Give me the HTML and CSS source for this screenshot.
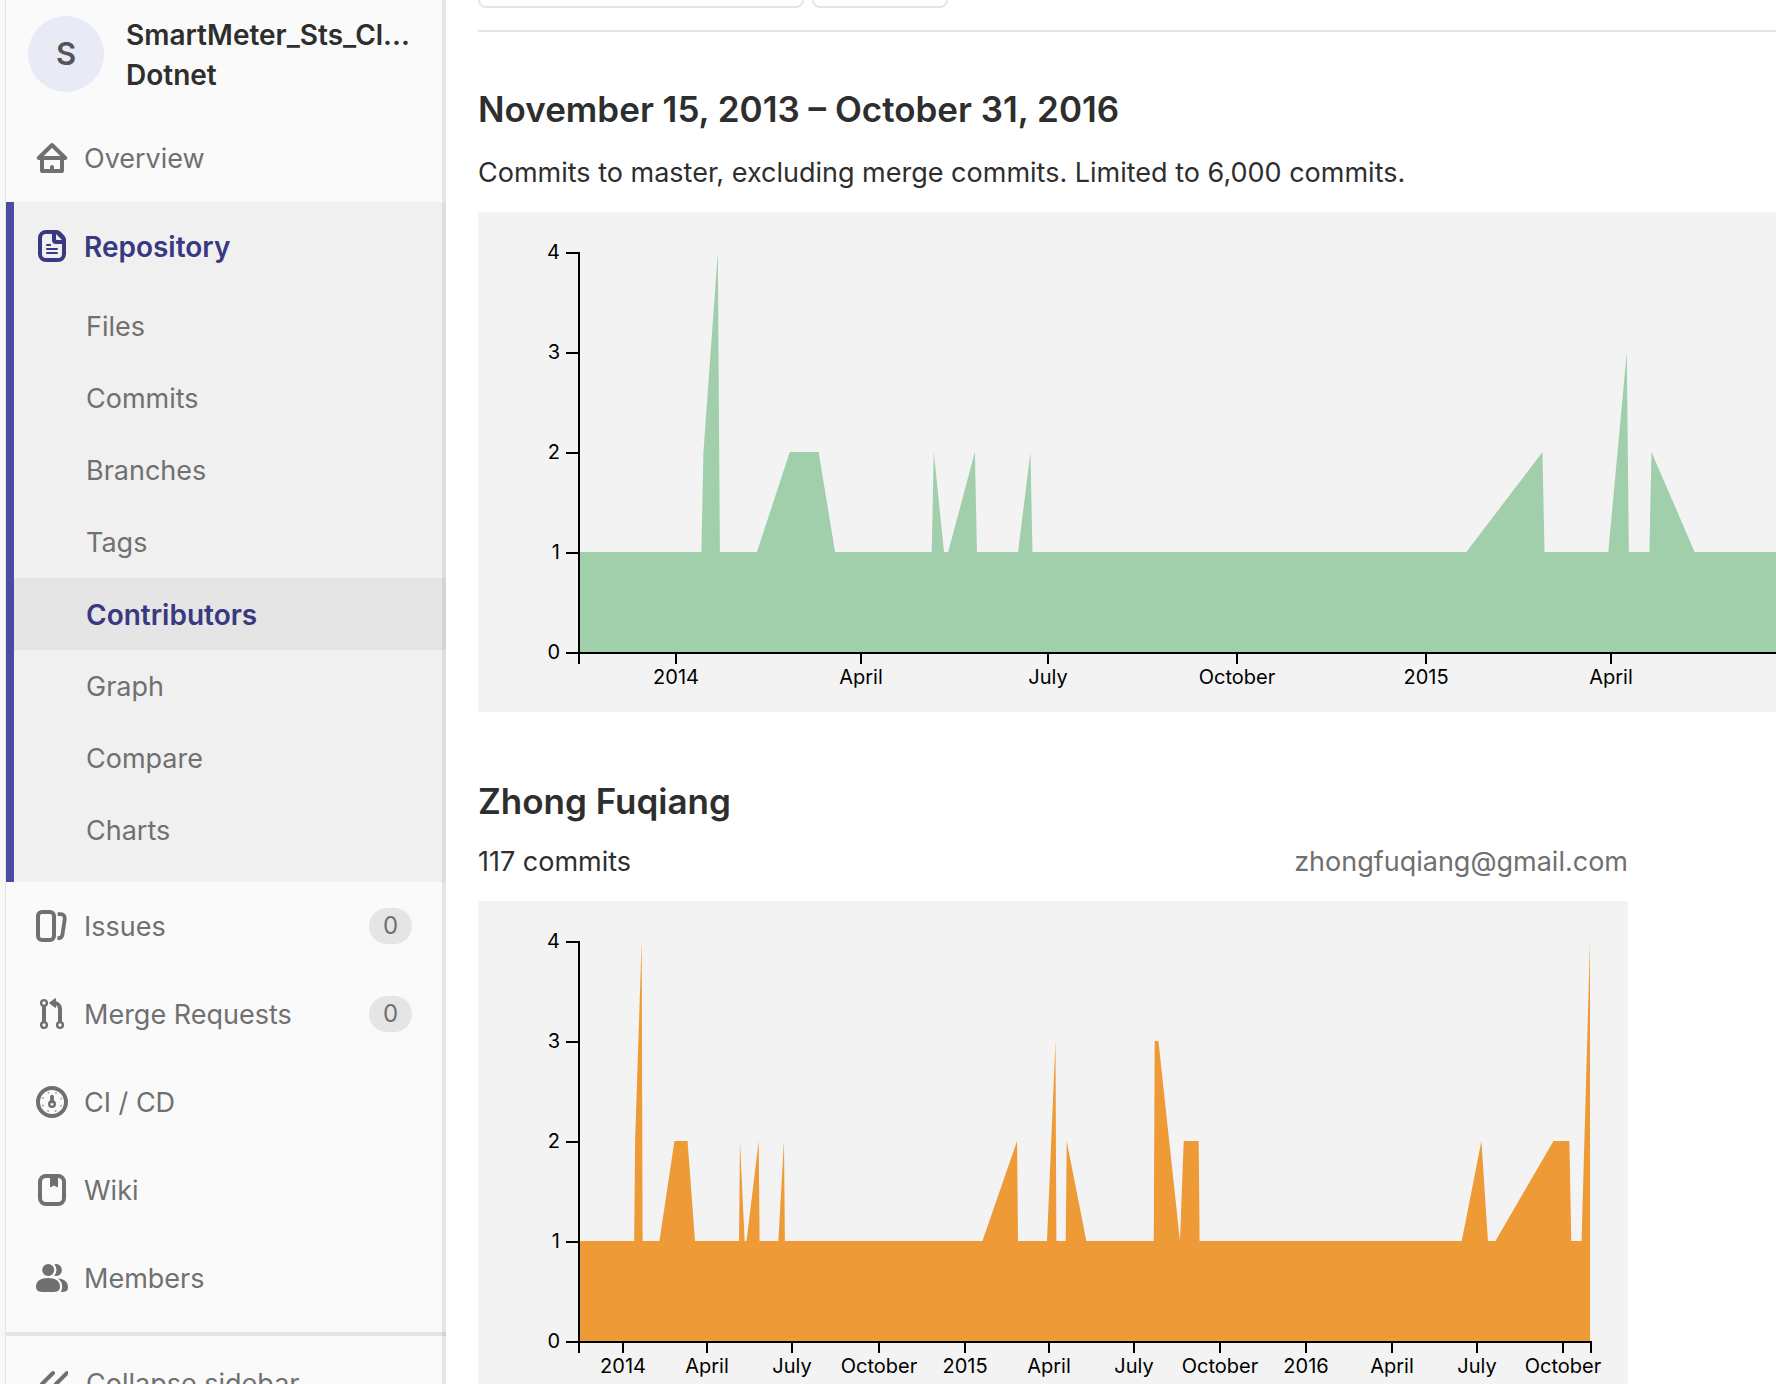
FILE: index.html
```html
<!DOCTYPE html>
<html lang="en">
<head>
<meta charset="utf-8">
<title>Contributors</title>
<link rel="stylesheet" href="styles.css">
</head>
<body>
<div class="layout">
  <aside class="sidebar">
    <a class="context" href="#">
      <span class="avatar">S</span>
      <span class="context-title">SmartMeter_Sts_Cl...<br>Dotnet</span>
    </a>
    <nav class="nav">
      <a class="nav-link" href="#">
        <svg class="icon" viewBox="0 0 16 16"><g fill="none" stroke="currentColor" stroke-width="2" stroke-linejoin="round" stroke-linecap="round"><path d="M1.4 8 8 1.5 14.6 8z"/><path d="M3 8v6.5h10V8"/></g><path d="M7 15v-2.5a1 1 0 0 1 2 0V15z" fill="currentColor"/></svg>
        <span class="nav-label">Overview</span>
      </a>
      <div class="section">
        <a class="nav-link nav-link-active" href="#">
          <svg class="icon" viewBox="0 0 16 16"><path fill="currentColor" fill-rule="evenodd" d="M5 0h5.2a3 3 0 0 1 2.1.9l1.8 1.8A3 3 0 0 1 15 4.800V12a4 4 0 0 1-4 4H5a4 4 0 0 1-4-4V4a4 4 0 0 1 4-4zm0 2a2 2 0 0 0-2 2v8a2 2 0 0 0 2 2h6a2 2 0 0 0 2-2V7h-3a2 2 0 0 1-2-2V2zm5 0v2.500a.5.5 0 0 0 .5.5H13z"/><path d="M5.500 7.500h1.600M5.500 9.500h5M5.500 11.500h5" stroke="currentColor" stroke-linecap="round"/></svg>
          <span class="nav-label">Repository</span>
        </a>
        <ul class="subnav">
          <li><a class="subnav-link" href="#">Files</a></li>
          <li><a class="subnav-link" href="#">Commits</a></li>
          <li><a class="subnav-link" href="#">Branches</a></li>
          <li><a class="subnav-link" href="#">Tags</a></li>
          <li><a class="subnav-link subnav-link-active" href="#">Contributors</a></li>
          <li><a class="subnav-link" href="#">Graph</a></li>
          <li><a class="subnav-link" href="#">Compare</a></li>
          <li><a class="subnav-link" href="#">Charts</a></li>
        </ul>
      </div>
      <a class="nav-link" href="#">
        <svg class="icon" viewBox="0 0 16 16"><g fill="none" stroke="currentColor" stroke-width="2"><rect x="1" y="1" width="8" height="14" rx="2"/><path d="M10.800 2.100h1.600a2 2 0 0 1 2 2.300l-1.200 8a2 2 0 0 1-2 1.700h-.5" stroke-width="1.900"/></g></svg>
        <span class="nav-label">Issues</span>
        <span class="badge">0</span>
      </a>
      <a class="nav-link" href="#">
        <svg class="icon" viewBox="0 0 16 16"><g fill="none" stroke="currentColor"><path stroke-width="2" d="M4 4.200v8.100M12 12.300V5.500a3 3 0 0 0-3-3"/><circle cx="4" cy="2.500" r="1.450" stroke-width="1.200"/><circle cx="4" cy="13.500" r="1.450" stroke-width="1.200"/><circle cx="12" cy="13.500" r="1.450" stroke-width="1.200"/></g><path fill="currentColor" stroke="currentColor" stroke-width=".6" stroke-linejoin="round" d="M6.900 2.500 9.700.4v4.200z"/></svg>
        <span class="nav-label">Merge Requests</span>
        <span class="badge">0</span>
      </a>
      <a class="nav-link" href="#">
        <svg class="icon" viewBox="0 0 16 16"><circle cx="8" cy="8" r="7" fill="none" stroke="currentColor" stroke-width="2"/><circle cx="8" cy="9" r="1.400" fill="none" stroke="currentColor" stroke-width="1.200"/><path d="M8 5.300v2.500" stroke="currentColor" stroke-width="1.900" stroke-linecap="round"/><circle cx="8" cy="8" r="4.900" fill="none" stroke="currentColor" stroke-width=".8" stroke-opacity=".7" stroke-dasharray=".8 3.048" stroke-dashoffset="-1.530"/></svg>
        <span class="nav-label">CI / CD</span>
      </a>
      <a class="nav-link" href="#">
        <svg class="icon" viewBox="0 0 16 16"><rect x="2" y="1" width="12" height="14" rx="3" fill="none" stroke="currentColor" stroke-width="2"/><path fill="currentColor" d="M7 1.500h4v4.700a.4.4 0 0 1-.6.300L9 5.800l-1.400.7a.4.4 0 0 1-.6-.3z"/></svg>
        <span class="nav-label">Wiki</span>
      </a>
      <a class="nav-link" href="#">
        <svg class="icon" viewBox="0 0 16 16"><g fill="currentColor"><circle cx="6.100" cy="4" r="3"/><path d="M9.200 1.100a3 3 0 1 1 0 5.800 4.600 4.600 0 0 0 0-5.800z"/><path d="M6 8c3.700 0 6 1.700 6 4.300 0 1.800-1 2.700-3 2.700H3c-2 0-3-.9-3-2.700C0 9.700 2.300 8 6 8z"/><path d="M11 8.200c3.100.2 5 1.800 5 4.200 0 1.700-.8 2.600-2.600 2.600h-1c.5-.7.7-1.600.7-2.600 0-1.800-.7-3.200-2.100-4.200z"/></g></svg>
        <span class="nav-label">Members</span>
      </a>
    </nav>
    <button class="collapse" type="button">
      <svg class="icon" viewBox="0 0 16 16"><path d="M8.500 3 3 8.500 8.500 14M15.500 3 10 8.500l5.500 5.500" fill="none" stroke="currentColor" stroke-width="2" stroke-linecap="round" stroke-linejoin="round"/></svg>
      <span class="nav-label">Collapse sidebar</span>
    </button>
  </aside>

  <main class="content">
    <div class="toolbar">
      <button class="control control-branch" type="button" aria-label="Branch"></button>
      <button class="control control-history" type="button" aria-label="History"></button>
    </div>

    <section class="block">
      <h4 class="heading">November 15, 2013 – October 31, 2016</h4>
      <p class="text">Commits to master, excluding merge commits. Limited to 6,000 commits.</p>
      <svg class="chart" role="img" aria-label="Commits to master">
        <defs>
          <!-- x is days since November 15, 2013; y is 4 minus the commit count -->
          <path id="commits" d="M0 4V3H60L61 2 68 0 69 3H87L103 2H117L125 3H172L173 2 178 3H180L193 2 194 3H214L220 2 221 3H432L469 2 470 3H501L510 1 511 3H521L522 2 543 3H615L616 1H620L643 3 647 2H663L664 3H944L965 2 972 3H980L1042 2H1059L1061 3H1072L1081 0V4z"/>
        </defs>
        <svg x="100" y="40" width="2223" height="400" viewBox="0 0 1081 4" preserveAspectRatio="none"><use href="#commits" class="area-total"/></svg>
        <path class="axis" d="M88 41h13v400H88M88 141h13M88 241h13M88 341h13M101 452V441H2324M198 441v11M383 441v11M570 441v11M759 441v11M948 441v11M1133 441v11"/>
        <g class="y-labels"><text x="82" y="47">4</text><text x="82" y="147">3</text><text x="82" y="247">2</text><text x="82" y="347">1</text><text x="82" y="447">0</text></g>
        <g class="x-labels"><text x="198" y="472">2014</text><text x="383" y="472">April</text><text x="570" y="472">July</text><text x="759" y="472">October</text><text x="948" y="472">2015</text><text x="1133" y="472">April</text></g>
      </svg>
    </section>

    <section class="block person">
      <h4 class="heading">Zhong Fuqiang</h4>
      <p class="text person-line"><span>117 commits</span><span class="muted">zhongfuqiang@gmail.com</span></p>
      <svg class="chart" role="img" aria-label="Commits by Zhong Fuqiang">
        <svg x="100" y="40" width="1012" height="400" viewBox="0 0 1081 4" preserveAspectRatio="none"><use href="#commits" class="area-person"/></svg>
        <path class="axis" d="M88 41h13v400H88M88 141h13M88 241h13M88 341h13M101 452V441H1113v11M145 441v11M229 441v11M314 441v11M401 441v11M487 441v11M571 441v11M656 441v11M742 441v11M828 441v11M914 441v11M999 441v11M1085 441v11"/>
        <g class="y-labels"><text x="82" y="47">4</text><text x="82" y="147">3</text><text x="82" y="247">2</text><text x="82" y="347">1</text><text x="82" y="447">0</text></g>
        <g class="x-labels"><text x="145" y="472">2014</text><text x="229" y="472">April</text><text x="314" y="472">July</text><text x="401" y="472">October</text><text x="487" y="472">2015</text><text x="571" y="472">April</text><text x="656" y="472">July</text><text x="742" y="472">October</text><text x="828" y="472">2016</text><text x="914" y="472">April</text><text x="999" y="472">July</text><text x="1085" y="472">October</text></g>
      </svg>
    </section>
  </main>
</div>
</body>
</html>
```
FILE: styles.css
```css
* {
  box-sizing: border-box;
}

body {
  margin: 0;
  font-family: Inter, "Liberation Sans", sans-serif;
  font-size: 27px;
  line-height: 40px;
  color: #2e2e2e;
  background: #fff;
}

a {
  color: inherit;
  text-decoration: none;
}

.layout {
  display: flex;
  height: 100vh;
  overflow: hidden;
  border-left: 5px solid #f7f7f7;
}

.sidebar {
  position: relative;
  flex: none;
  width: 441px;
  overflow: hidden;
  color: #707070;
  background: #fafafa;
  border-left: 1px solid #e5e5e5;
}

.sidebar::after {
  content: "";
  position: absolute;
  top: 0;
  right: 0;
  bottom: 0;
  width: 4px;
  background: rgba(0, 0, 0, 0.08);
}

.context {
  display: flex;
  align-items: center;
  gap: 22px;
  height: 114px;
  padding: 0 20px 6px 22px;
  font-size: 28px;
  font-weight: 600;
  color: #2e2e2e;
}

.avatar {
  flex: none;
  width: 76px;
  border-radius: 50%;
  font-size: 31px;
  line-height: 76px;
  text-align: center;
  color: #555;
  background: #e8eaf6;
}

.context-title {
  padding-top: 2px;
  white-space: nowrap;
}

.nav-link {
  display: flex;
  align-items: center;
  gap: 16px;
  height: 88px;
  padding: 0 34px 0 30px;
}

.nav-label {
  padding-top: 2px;
}

.icon {
  flex: none;
  width: 32px;
  height: 32px;
}

.section {
  padding-bottom: 16px;
  background: #f0f0f0;
  box-shadow: inset 8px 0 #4b4ba3;
}

.nav-link-active,
.subnav-link-active {
  font-size: 28px;
  font-weight: 600;
  color: #393982;
}

.subnav {
  margin: 0;
  padding: 0;
  list-style: none;
}

.subnav-link {
  display: block;
  margin-left: 8px;
  padding: 17px 0 15px 72px;
}

.subnav-link-active {
  background: #e5e5e5;
}

.badge {
  min-width: 43px;
  margin-left: auto;
  border-radius: 18px;
  font-size: 24px;
  line-height: 36px;
  text-align: center;
  background: #e5e5e5;
}

.collapse {
  display: flex;
  align-items: center;
  gap: 18px;
  width: 100%;
  height: 98px;
  margin-top: 10px;
  padding: 0 30px;
  border: 0;
  border-top: 4px solid #e5e5e5;
  font: inherit;
  color: inherit;
  background: none;
}

.content {
  flex: 1;
  min-width: 0;
  padding-left: 32px;
}

.toolbar {
  display: flex;
  align-items: flex-end;
  gap: 8px;
  height: 32px;
  padding-bottom: 22px;
  border-bottom: 2px solid #e5e5e5;
}

.control {
  height: 68px;
  padding: 0;
  border: 2px solid #e5e5e5;
  border-radius: 8px;
  background: #fff;
}

.control-branch {
  width: 326px;
}

.control-history {
  width: 136px;
}

.block {
  padding-top: 55px;
}

.heading {
  margin: 0;
  font-size: 35px;
  font-weight: 600;
  line-height: 44px;
}

.text {
  margin: 22px 0 19px;
}

.chart {
  display: block;
  width: 100%;
  height: 500px;
  background: #f3f3f3;
}

.person {
  width: 1150px;
  max-width: 100%;
  padding-top: 67px;
}

.person-line {
  display: flex;
  justify-content: space-between;
  margin-top: 19px;
}

.muted {
  color: #707070;
}

.area-total {
  fill: #a1cfab;
}

.area-person {
  fill: #ee9a37;
}

.axis {
  fill: none;
  stroke: #000;
  stroke-width: 2px;
}

.x-labels,
.y-labels {
  font-size: 20px;
}

.x-labels {
  text-anchor: middle;
}

.y-labels {
  text-anchor: end;
}
```
